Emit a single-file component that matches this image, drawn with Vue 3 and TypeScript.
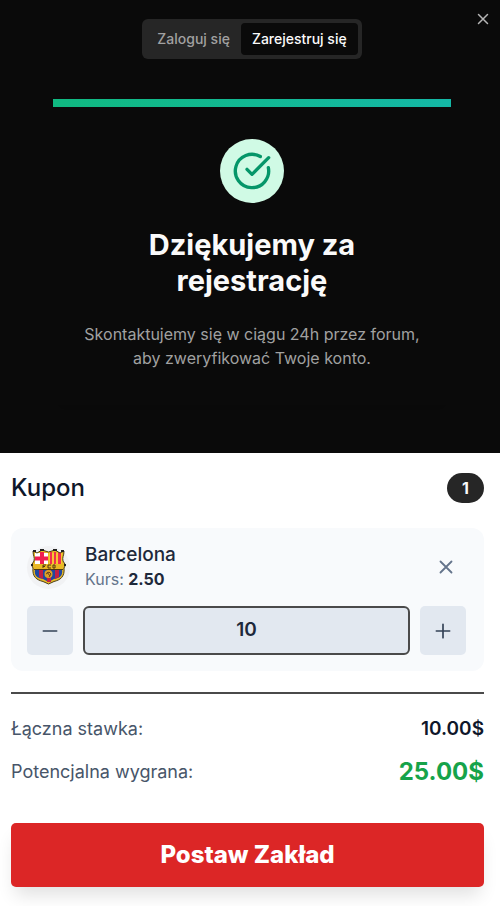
<script setup lang="ts">
import { computed, ref } from 'vue'

const mode = ref<'login' | 'register'>('register')
const odds = 2.5
const stake = ref('10')

const total = computed(() => Number(stake.value) || 0)
const payout = computed(() => total.value * odds)

function change(by: number): void {
  stake.value = String(Math.max(0, total.value + by))
}
</script>

<template>
  <main class="page">
    <section class="signup">
      <button class="close" type="button" aria-label="Zamknij">
        <svg width="18" height="18" viewBox="0 0 24 24"><path d="M18 6 6 18M6 6l12 12" /></svg>
      </button>
      <div class="tabs">
        <button type="button" class="tab" :class="{ active: mode === 'login' }" @click="mode = 'login'">Zaloguj się</button>
        <button type="button" class="tab" :class="{ active: mode === 'register' }" @click="mode = 'register'">Zarejestruj się</button>
      </div>
      <div class="thanks">
        <div class="bar"></div>
        <div class="tick">
          <svg width="40" height="40" viewBox="0 0 24 24">
            <path d="M21.801 10A10 10 0 1 1 17 3.335" />
            <path d="m9 11 3 3L22 4" />
          </svg>
        </div>
        <h1>Dziękujemy za<br />rejestrację</h1>
        <p>Skontaktujemy się w ciągu 24h przez forum,<br />aby zweryfikować Twoje konto.</p>
      </div>
    </section>

    <section class="coupon">
      <header class="head">
        <h2>Kupon</h2>
        <span class="count">1</span>
      </header>

      <article class="bet">
        <div class="team">
          <span class="crest">
            <svg width="37" height="38" viewBox="0 0 37 38">
              <defs>
                <clipPath id="shield">
                  <path d="M3 3 7 5 12 2 18.500 4 25 2 30 5 34 3C34 8 32 9 33 13L35.500 17 34 20C35 29 30 32 24 33.500L18.500 36 13 33.500C7 32 2 29 3 20L1.500 17 4 13C5 9 3 8 3 3Z" />
                </clipPath>
              </defs>
              <g clip-path="url(#shield)">
                <rect width="37" height="38" fill="#e9b824" />
                <rect x="5" y="5" width="13" height="11" fill="#fff" />
                <path d="M10 4h4v12h-4zM5 8.500h13v4H5z" fill="#f01f50" />
                <rect x="19" y="5" width="13" height="11" fill="#f5c832" />
                <path d="M20 4h2v12h-2zM24 4h2v12h-2zM28 4h3v12h-3z" fill="#f0304d" />
                <path d="M5 21h27c1 7-2 9-8 10l-5.500 3-5.500-3c-6-1-9-3-8-10z" fill="#20489f" />
                <path d="M9 21h4v10l-4-2zM17 21h4v13h-4zM25 21h4v8l-4 2z" fill="#c01f45" />
                <circle cx="18.500" cy="26" r="4" fill="#dfa323" />
                <path d="m16 26 3-2 2 2-2 3M17 24l3 4" fill="none" stroke="#68421f" />
              </g>
              <path d="M3 3 7 5 12 2 18.500 4 25 2 30 5 34 3C34 8 32 9 33 13L35.500 17 34 20C35 29 30 32 24 33.500L18.500 36 13 33.500C7 32 2 29 3 20L1.500 17 4 13C5 9 3 8 3 3Z" fill="none" stroke="#4d4018" />
              <path d="M10 2h4M23 2h4M3 3h3M31 3h3M1 17h2M34 17h2" fill="none" stroke="#222" stroke-width="2" />
              <path d="M13 20v-3h3m-3 1.500h2M21 17h-3v3h3M23 20v-3h2v3h-2M4 21.500h29" fill="none" stroke="#4c3811" />
            </svg>
          </span>
          <div class="info">
            <h3>Barcelona</h3>
            <p>Kurs: <strong>{{ odds.toFixed(2) }}</strong></p>
          </div>
          <button class="remove" type="button" aria-label="Usuń zakład">
            <svg width="22" height="22" viewBox="0 0 24 24"><path d="M18 6 6 18M6 6l12 12" /></svg>
          </button>
        </div>
        <div class="stake">
          <button type="button" aria-label="Zmniejsz stawkę" @click="change(-1)">
            <svg width="20" height="20" viewBox="0 0 24 24"><path d="M4 12h16" /></svg>
          </button>
          <input v-model="stake" type="text" inputmode="decimal" aria-label="Stawka" />
          <button type="button" aria-label="Zwiększ stawkę" @click="change(1)">
            <svg width="20" height="20" viewBox="0 0 24 24"><path d="M4 12h16M12 4v16" /></svg>
          </button>
        </div>
      </article>

      <dl class="summary">
        <div><dt>Łączna stawka:</dt><dd>{{ total.toFixed(2) }}$</dd></div>
        <div><dt>Potencjalna wygrana:</dt><dd class="win">{{ payout.toFixed(2) }}$</dd></div>
      </dl>

      <button class="submit" type="button">Postaw Zakład</button>
    </section>
  </main>
</template>

<style>
body {
  margin: 0;
  background: #fff;
}
</style>

<style scoped>
.page {
  font-family: Inter, "Liberation Sans", sans-serif;
  overflow: hidden;
}
h1, h2, h3, p, dl, dd {
  margin: 0;
}
button {
  border: 0;
  padding: 0;
  font-family: inherit;
  cursor: pointer;
}
svg {
  display: block;
}
button svg, .tick svg {
  fill: none;
  stroke: currentColor;
  stroke-width: 2;
  stroke-linecap: round;
  stroke-linejoin: round;
}
.signup {
  position: relative;
  display: flex;
  flex-direction: column;
  align-items: center;
  gap: 40px;
  padding: 19px 49px 48px 53px;
  background: #0a0a0a;
}
.close {
  position: absolute;
  top: 10px;
  right: 8px;
  color: #b5b5b5;
  background: none;
}
.tabs {
  display: flex;
  padding: 4px;
  border-radius: 6px;
  background: #262626;
}
.tab {
  padding: 0 11px;
  border-radius: 4px;
  font-size: 14px;
  font-weight: 500;
  line-height: 32px;
  color: #a1a1a1;
  background: none;
}
.tab.active {
  color: #fafafa;
  background: #0a0a0a;
}
.thanks {
  align-self: stretch;
  display: flex;
  flex-direction: column;
  align-items: center;
  text-align: center;
  box-shadow: 0 8px 6px -10px rgb(0 0 0 / 25%);
}
.bar {
  align-self: stretch;
  height: 8px;
  background: linear-gradient(90deg, #10b981, #14b8a6);
}
.tick {
  margin: 32px 0 24px;
  padding: 12px;
  border-radius: 50%;
  color: #059669;
  background: #d0fae5;
}
h1 {
  font-size: 29px;
  font-weight: 700;
  line-height: 36px;
  color: #fafafa;
}
.thanks p {
  margin-top: 23px;
  padding-bottom: 35px;
  font-size: 16px;
  line-height: 24px;
  color: #a1a1a1;
}
.coupon {
  padding: 20px 16px 19px 11px;
}
.head {
  display: flex;
  align-items: center;
  justify-content: space-between;
  height: 30px;
}
h2 {
  font-size: 24px;
  font-weight: 500;
  line-height: 26px;
  color: #0f172a;
}
.count {
  padding: 0 15px;
  border-radius: 15px;
  font-size: 16px;
  font-weight: 700;
  line-height: 30px;
  color: #fafafa;
  background: #262626;
}
.bet {
  display: grid;
  gap: 15px;
  margin-top: 25px;
  padding: 15px 18px 16px 16px;
  border-radius: 12px;
  background: #f8fafc;
}
.team {
  display: flex;
  align-items: center;
  gap: 15px;
}
.crest {
  display: grid;
  place-items: center;
  width: 43px;
  height: 43px;
  border-radius: 50%;
  background: #f1f2f4;
}
.info {
  flex: 1;
  line-height: 24px;
}
h3 {
  font-size: 19px;
  font-weight: 500;
  color: #1e293b;
}
.info p {
  font-size: 16px;
  color: #64748b;
}
.info strong {
  font-weight: 700;
  color: #1e293b;
}
.remove {
  padding: 0 9px;
  color: #64748b;
  background: none;
}
.stake {
  display: flex;
  gap: 10px;
}
.stake button {
  display: grid;
  place-items: center;
  width: 46px;
  border-radius: 5px;
  color: #334155;
  background: #e2e8f0;
}
.stake input {
  flex: 1;
  min-width: 0;
  box-sizing: border-box;
  height: 49px;
  padding: 0 0 2px;
  border: 2px solid #4a4a4a;
  border-radius: 6px;
  font-family: inherit;
  font-size: 19px;
  font-weight: 600;
  text-align: center;
  color: #1e293b;
  background: #e2e8f0;
  outline: 0;
}
.summary {
  display: grid;
  gap: 13px;
  margin-top: 21px;
  padding-top: 20px;
  border-top: 2px solid #4a4a4a;
}
.summary div {
  display: flex;
  align-items: center;
  justify-content: space-between;
  line-height: 30px;
}
dt {
  font-size: 18px;
  color: #475569;
}
dd {
  font-size: 19px;
  font-weight: 600;
  color: #0f172a;
}
dd.win {
  font-size: 24px;
  font-weight: 700;
  color: #16a34a;
}
.submit {
  display: block;
  width: 100%;
  margin-top: 36px;
  border-radius: 5px;
  font-size: 24px;
  font-weight: 800;
  line-height: 64px;
  color: #fff;
  background: #dc2626;
  box-shadow: 0 12px 18px -4px rgb(0 0 0 / 12%);
}
</style>
